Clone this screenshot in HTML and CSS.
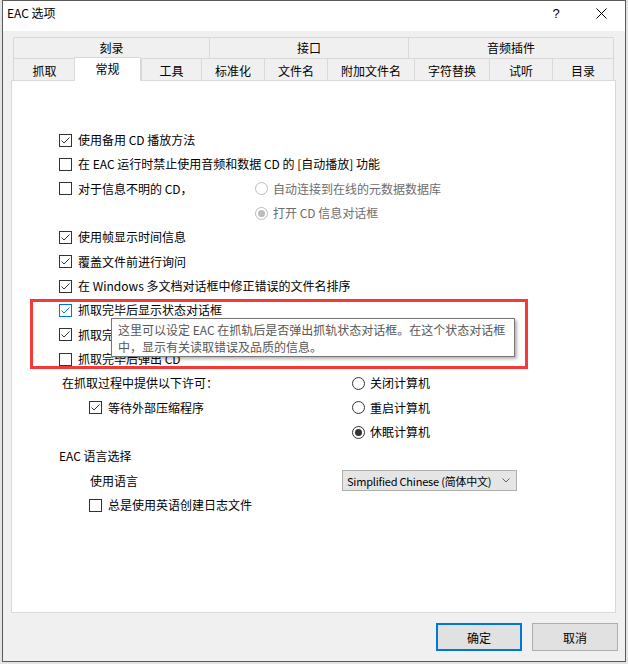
FILE: index.html
```html
<!DOCTYPE html>
<html lang="zh-CN">
<head>
<meta charset="utf-8">
<title>EAC 选项</title>
<link rel="stylesheet" href="styles.css">
</head>
<body>
<div class="window">
  <div class="titlebar">
    <span class="title">EAC 选项</span>
    <span class="tb-btn tb-help">?</span>
    <span class="tb-btn tb-close"><svg width="11" height="11" viewBox="0 0 11 11"><path d="M0.5 0.5L10.5 10.5M10.5 0.5L0.5 10.5" stroke="#000" stroke-width="1" fill="none"/></svg></span>
  </div>
  <div class="client">
    <div class="tabs">
      <div class="tabrow upper">
        <div class="tab t-burn">刻录</div>
        <div class="tab t-iface">接口</div>
        <div class="tab t-plugin last">音频插件</div>
      </div>
      <div class="tabrow lower">
        <div class="tab t-rip">抓取</div>
        <div class="tab t-gen active">常规</div>
        <div class="tab t-tool">工具</div>
        <div class="tab t-norm">标准化</div>
        <div class="tab t-fname">文件名</div>
        <div class="tab t-extra">附加文件名</div>
        <div class="tab t-char">字符替换</div>
        <div class="tab t-listen">试听</div>
        <div class="tab t-dir last">目录</div>
      </div>
    </div>
    <div class="panel">
      <div class="opts">
        <div class="row"><span class="cb"><svg viewBox="0 0 11 11"><path d="M1.5 5.5L4 8L9.5 2.5"/></svg></span><span>使用备用 CD 播放方法</span></div>
        <div class="row"><span class="cb"></span><span>在 EAC 运行时禁止使用音频和数据 CD 的 [自动播放] 功能</span></div>
        <div class="row split">
          <div class="cell"><span class="cb"></span><span>对于信息不明的 CD，</span></div>
          <div class="cell"><span class="rb dis"></span><span class="dis-text">自动连接到在线的元数据数据库</span></div>
        </div>
        <div class="row split">
          <div class="cell"></div>
          <div class="cell"><span class="rb dis on"></span><span class="dis-text">打开 CD 信息对话框</span></div>
        </div>
        <div class="row"><span class="cb"><svg viewBox="0 0 11 11"><path d="M1.5 5.5L4 8L9.5 2.5"/></svg></span><span>使用帧显示时间信息</span></div>
        <div class="row"><span class="cb"><svg viewBox="0 0 11 11"><path d="M1.5 5.5L4 8L9.5 2.5"/></svg></span><span>覆盖文件前进行询问</span></div>
        <div class="row"><span class="cb"><svg viewBox="0 0 11 11"><path d="M1.5 5.5L4 8L9.5 2.5"/></svg></span><span>在 Windows 多文档对话框中修正错误的文件名排序</span></div>
        <div class="row"><span class="cb hover"><svg viewBox="0 0 11 11"><path d="M1.5 5.5L4 8L9.5 2.5"/></svg></span><span>抓取完毕后显示状态对话框</span></div>
        <div class="row"><span class="cb"><svg viewBox="0 0 11 11"><path d="M1.5 5.5L4 8L9.5 2.5"/></svg></span><span>抓取完毕后自动关闭状态对话框</span></div>
        <div class="row"><span class="cb"></span><span>抓取完毕后弹出 CD</span></div>
        <div class="row grid2">
          <div class="cell"><span class="perm">在抓取过程中提供以下许可：</span></div>
          <div class="cell right"><span class="rb"></span><span>关闭计算机</span></div>
        </div>
        <div class="row grid2">
          <div class="cell indent"><span class="cb"><svg viewBox="0 0 11 11"><path d="M1.5 5.5L4 8L9.5 2.5"/></svg></span><span>等待外部压缩程序</span></div>
          <div class="cell right"><span class="rb"></span><span>重启计算机</span></div>
        </div>
        <div class="row grid2">
          <div class="cell"></div>
          <div class="cell right"><span class="rb on"></span><span>休眠计算机</span></div>
        </div>
        <div class="row"><span>EAC 语言选择</span></div>
        <div class="row grid2">
          <div class="cell"><span class="lang">使用语言</span></div>
          <div class="cell"><div class="select"><span class="sel-text">Simplified Chinese (简体中文)</span><svg width="8" height="5" viewBox="0 0 8 5"><path d="M0.5 0.5L4 4L7.5 0.5" stroke="#606060" fill="none"/></svg></div></div>
        </div>
        <div class="row grid2">
          <div class="cell indent"><span class="cb"></span><span>总是使用英语创建日志文件</span></div>
          <div class="cell"></div>
        </div>
      </div>
      <div class="redbox"></div>
      <div class="tooltip">这里可以设定 EAC 在抓轨后是否弹出抓轨状态对话框。在这个状态对话框<br>中，显示有关读取错误及品质的信息。</div>
    </div>
    <div class="buttons">
      <div class="btn default">确定</div>
      <div class="btn">取消</div>
    </div>
  </div>
</div>
</body>
</html>
```

FILE: styles.css
```css
* { box-sizing: border-box; }
html, body { margin: 0; padding: 0; }
body {
  width: 628px;
  height: 664px;
  overflow: hidden;
  background: #e4e4e4;
  font-family: "Noto Sans CJK SC", "Noto Sans", sans-serif;
  font-size: 12px;
  color: #000;
}
.window {
  margin-left: 2px;
  width: 624px;
  height: 662px;
  border: 1px solid #5a5a5a;
  background: #f0f0f0;
  display: flex;
  flex-direction: column;
}
.titlebar {
  height: 30px;
  background: #fff;
  display: flex;
  align-items: flex-start;
  flex: none;
}
.title { margin-left: 4px; margin-top: 4px; flex: 1; line-height: 16px; }
.tb-btn {
  height: 24px;
  display: flex;
  align-items: center;
  justify-content: center;
}
.tb-help { width: 44px; font-size: 13px; font-family: "Liberation Sans", sans-serif; }
.tb-close { width: 46px; margin-right: 1px; }
.client { flex: 1; padding-top: 6px; display: flex; flex-direction: column; }
.tabs { margin-left: 10px; width: 601px; position: relative; z-index: 2; }
.tabrow { display: flex; align-items: flex-start; }
.tabrow.upper { height: 21px; }
.tabrow.lower { height: 22px; }
.tab {
  border-top: 1px solid #d9d9d9;
  border-left: 1px solid #d9d9d9;
  background: #f0f0f0;
  text-align: center;
  flex: none;
}
.tab.last { border-right: 1px solid #d9d9d9; }
.upper .tab { height: 21px; line-height: 18px; padding-top: 1px; }
.lower .tab { height: 22px; line-height: 18px; padding-top: 3px; }
.lower .tab.active {
  height: 24px;
  margin-top: -1px;
  margin-left: -1px;
  background: #fff;
  border-right: 1px solid #d9d9d9;
  padding-top: 2px;
  position: relative;
}
.t-burn { width: 196px; }
.t-iface { width: 199px; }
.t-plugin { width: 206px; }
.t-rip { width: 62px; }
.t-gen { width: 67px; }
.t-tool { width: 60px; }
.t-norm { width: 63px; }
.t-fname { width: 63px; }
.t-extra { width: 87px; }
.t-char { width: 75px; }
.t-listen { width: 63px; }
.t-dir { width: 62px; }

.panel {
  margin-left: 8px;
  width: 605px;
  height: 533px;
  border: 1px solid #d9d9d9;
  background: #fff;
  position: relative;
  z-index: 1;
  flex: none;
}
.opts { padding: 47px 0 0 47px; }
.row {
  height: 24.33px;
  display: flex;
  align-items: center;
  white-space: nowrap;
  line-height: 16px;
}
.row.split { display: grid; grid-template-columns: 196px auto; align-items: center; }
.row.grid2 { display: grid; grid-template-columns: 283px auto; align-items: center; }
.cell { display: flex; align-items: center; }
.cell.right { margin-left: 10px; }
.cell.indent { margin-left: 30px; }
.perm { margin-left: 3px; }
.lang { margin-left: 31px; }
.cb {
  width: 13px;
  height: 13px;
  border: 1px solid #333;
  background: #fff;
  margin-right: 6px;
  flex: none;
  display: flex;
}
.cb svg { width: 11px; height: 11px; fill: none; stroke: #333; stroke-width: 1; }
.cb.hover { border-color: #0078d7; }
.cb.hover svg { stroke: #0078d7; }
.rb {
  width: 13px;
  height: 13px;
  border: 1px solid #333;
  border-radius: 50%;
  background: #fff;
  margin-right: 5px;
  flex: none;
  display: flex;
  align-items: center;
  justify-content: center;
}
.rb.on::after {
  content: "";
  width: 7px;
  height: 7px;
  border-radius: 50%;
  background: #333;
}
.rb.dis { border-color: #bcbcbc; }
.rb.dis.on::after { background: #bcbcbc; }
.dis-text { color: #6d6d6d; }
.select {
  width: 175px;
  height: 21px;
  border: 1px solid #adadad;
  background: #e5e5e5;
  display: flex;
  align-items: center;
  justify-content: space-between;
  padding: 0 6px 0 4px;
}
.sel-text { font-size: 11px; letter-spacing: -0.2px; }
.redbox {
  position: absolute;
  left: 18px;
  top: 218px;
  width: 498px;
  height: 70px;
  border: 3px solid #f33a3a;
}
.tooltip {
  position: absolute;
  left: 99px;
  top: 237px;
  width: 404px;
  height: 39px;
  border: 1px solid #767676;
  background: #fff;
  color: #575757;
  padding: 2px 0 0 6px;
  line-height: 17px;
  white-space: nowrap;
  box-shadow: 2px 2px 3px rgba(0,0,0,0.3);
}
.buttons {
  display: flex;
  justify-content: flex-end;
  gap: 10px;
  margin-top: 10px;
  padding-right: 7px;
}
.btn {
  width: 86px;
  height: 28px;
  border: 1px solid #adadad;
  background: #e1e1e1;
  display: flex;
  align-items: center;
  justify-content: center;
}
.btn.default { border: 2px solid #0078d7; }
```
